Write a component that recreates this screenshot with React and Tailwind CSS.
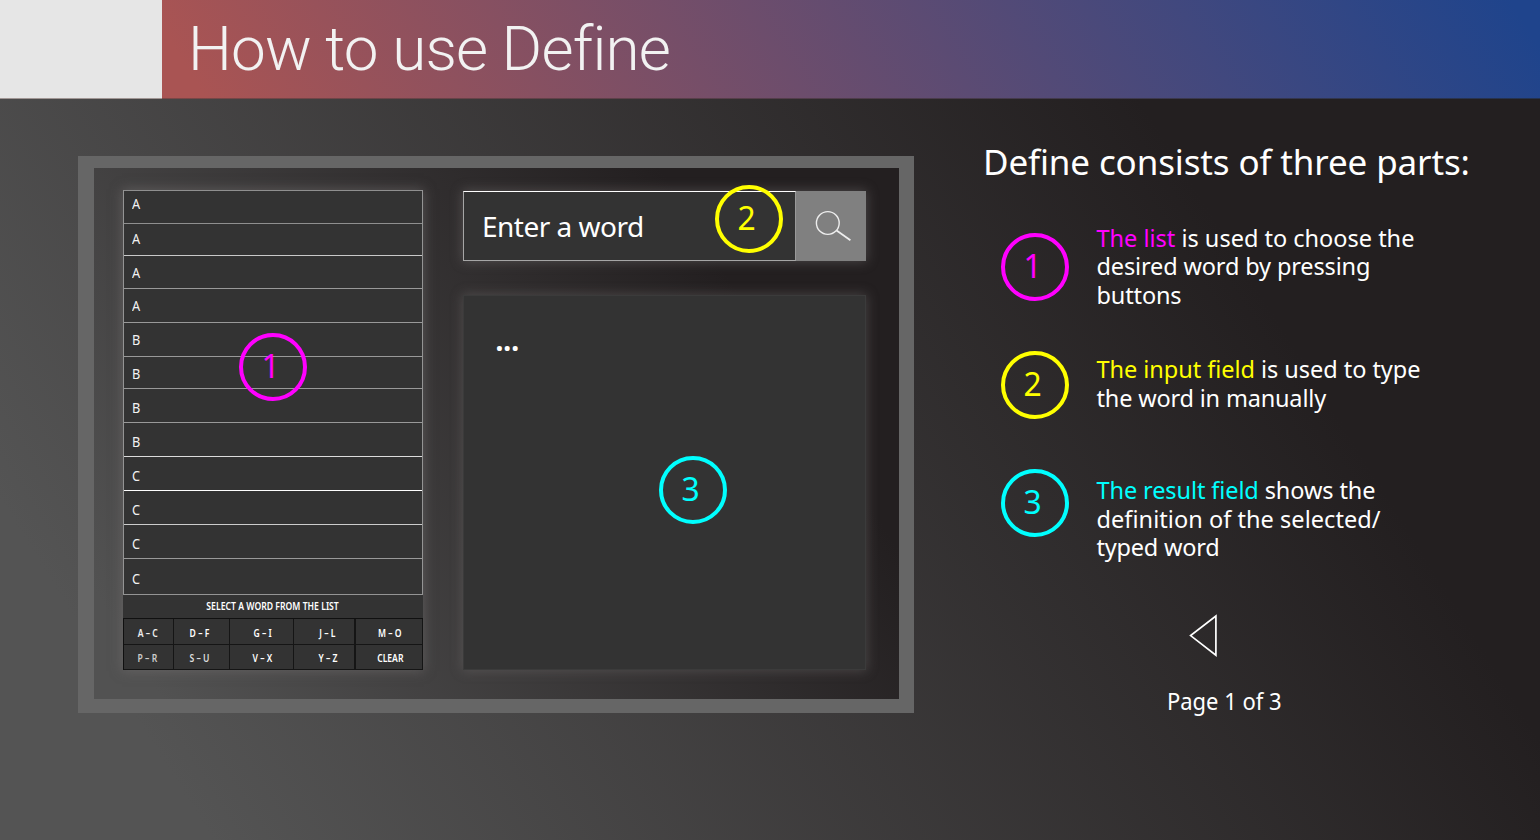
const rows = [
  { letter: "A", cls: "h-[33px] border-[#8f8f8f] pb-[7px]" },
  { letter: "A", cls: "h-[32px] border-[#8f8f8f] pb-[2px]" },
  { letter: "A", cls: "h-[33px] border-[#c9c9c9]" },
  { letter: "A", cls: "h-[34px] border-[#999999]" },
  { letter: "B", cls: "h-[34px] border-[#999999]" },
  { letter: "B", cls: "h-[32px] border-[#999999] pt-[1px]" },
  { letter: "B", cls: "h-[34px] border-[#999999] pt-[4px]" },
  { letter: "B", cls: "h-[34px] border-[#999999] pt-[4px]" },
  { letter: "C", cls: "h-[34px] border-[#dcdcdc] pt-[4px]" },
  { letter: "C", cls: "h-[34px] border-[#ffffff] pt-[4px]" },
  { letter: "C", cls: "h-[34px] border-[#cccccc] pt-[4px]" },
  { letter: "C", cls: "h-[36px] border-[#999999] pt-[4px]" },
];

const ranges = [
  { label: "A – C", cls: "border-r pr-[2px] pt-[3px] text-[#eeeeee]" },
  { label: "D – F", cls: "border-r pr-[4px] pt-[3px]" },
  { label: "G – I", cls: "border-r pl-[2px] pt-[3px]" },
  { label: "J – L", cls: "border-r-2 pl-[7px] pt-[3px]" },
  { label: "M – O", cls: "border-r pl-[2px] pt-[3px]" },
  { label: "P – R", cls: "border-r pr-[2px] pt-[1px] text-[#cccccc]" },
  { label: "S – U", cls: "border-r pr-[4px] pt-[1px] text-[#dddddd]" },
  { label: "V – X", cls: "border-r pl-[2px] pt-[1px]" },
  { label: "Y – Z", cls: "border-r-2 pl-[7px] pt-[1px]" },
  { label: "CLEAR", cls: "border-r pl-[2px] pt-[1px]" },
];

function Badge({ n, cls }) {
  return (
    <div
      className={`flex size-[68px] shrink-0 items-center justify-center rounded-full border-4 pr-[4px] pb-[2px] text-[33.5px] leading-none ${cls}`}
    >
      <span className="inline-block scale-x-95">{n}</span>
    </div>
  );
}

function WordList() {
  return (
    <div className="flex w-[300px] flex-col self-start bg-[#333333] shadow-[0_0_11px_1px_rgba(120,116,116,0.5)]">
      <div className="border-r border-b border-l border-[#949494]">
        {rows.map((row, i) => (
          <div
            key={i}
            className={`flex items-center border-t pl-[8px] text-[14.5px] leading-none text-[#f2f2f2] ${row.cls}`}
          >
            <span className="inline-block origin-left scale-x-[0.88]">{row.letter}</span>
          </div>
        ))}
      </div>
      <div className="flex h-[23px] items-center justify-center pb-[1px] text-[10px] leading-none font-semibold whitespace-nowrap">
        <span className="inline-block scale-x-[0.865]">SELECT A WORD FROM THE LIST</span>
      </div>
      <div className="grid grid-cols-[50px_56px_64px_62px_67px] grid-rows-[26px_25px] border-t border-l border-[#101010]">
        {ranges.map((r) => (
          <div
            key={r.label}
            className={`flex items-center justify-center border-b border-[#151515] text-[10px] leading-none font-semibold whitespace-nowrap ${r.cls}`}
          >
            <span className="inline-block scale-x-[0.86]">{r.label}</span>
          </div>
        ))}
      </div>
    </div>
  );
}

function Demo() {
  return (
    <div className="relative flex h-[557px] w-[836px] border-t-[12px] border-r-[15px] border-b-[14px] border-l-[16px] border-[#666666] bg-[linear-gradient(58deg,#525252_6%,#231f20_79%)] bg-origin-padding pt-[22px] pl-[29px]">
      <WordList />
      <div className="ml-[40px] flex w-[403px] flex-col">
        <div className="mt-px flex h-[70px] shadow-[0_0_11px_1px_rgba(120,116,116,0.45)]">
          <div className="flex grow items-center border border-t-white border-r-[#999999] border-b-[#a6a6a6] border-l-[#a6a6a6] bg-[#333333] pl-[18px] text-[28px] leading-none tracking-[-0.5px]">
            Enter a word
          </div>
          <div className="flex w-[70px] items-center justify-center bg-[#808080]">
            <svg className="h-[70px] w-[70px]" viewBox="0 0 70 70" fill="none" stroke="#eeeeee" strokeWidth="1.4">
              <circle cx="31.8" cy="32" r="11.4" />
              <path d="M40.6 39.6 L54.4 49.2" strokeWidth="1.8" />
            </svg>
          </div>
        </div>
        <div className="mt-[34px] h-[375px] border border-[#3b3b3b] bg-[#333333] pt-[23px] pl-[31px] text-[32px] leading-[40px] font-semibold tracking-[-1px] shadow-[0_0_11px_1px_rgba(120,116,116,0.4)]">
          ...
        </div>
      </div>
      <div className="absolute top-[165px] left-[145px]">
        <Badge n="1" cls="border-[#ff00ff] text-[#ff00ff]" />
      </div>
      <div className="absolute top-[16.5px] left-[620.5px]">
        <Badge n="2" cls="border-[#ffff00] text-[#ffff00]" />
      </div>
      <div className="absolute top-[287.5px] left-[565px]">
        <Badge n="3" cls="border-[#00ffff] text-[#00ffff]" />
      </div>
    </div>
  );
}

function Guide() {
  return (
    <div className="ml-[68px] flex w-[520px] flex-col pt-[38px]">
      <h2 className="h-[87px] pt-px pl-px text-[35px] leading-[50px] tracking-[-0.13px] whitespace-nowrap">
        Define consists of three parts:
      </h2>
      <ul className="grid h-[354px] grid-rows-3 pl-[19px] text-[23.5px] leading-[28.6px] whitespace-nowrap">
        <li className="flex gap-[27.5px]">
          <div className="pt-[9.5px]">
            <Badge n="1" cls="border-[#ff00ff] text-[#ff00ff]" />
          </div>
          <p className="pt-[0.8px]">
            <span className="text-[#ff00ff]">The list</span> is used to choose the
            <br />
            <span className="tracking-[-0.14px]">desired word by pressing</span>
            <br />
            <span className="tracking-[-0.14px]">buttons</span>
          </p>
        </li>
        <li className="flex gap-[27.5px]">
          <div className="pt-[9.5px]">
            <Badge n="2" cls="border-[#ffff00] text-[#ffff00]" />
          </div>
          <p className="pt-[14px] tracking-[-0.04px]">
            <span className="text-[#ffff00]">The input field</span> is used to type
            <br />
            <span className="tracking-[-0.18px]">the word in manually</span>
          </p>
        </li>
        <li className="flex gap-[27.5px]">
          <div className="pt-[9.5px]">
            <Badge n="3" cls="border-[#00ffff] text-[#00ffff]" />
          </div>
          <p className="pt-[17px]">
            <span className="tracking-[-0.1px]">
              <span className="text-[#00ffff]">The result field</span> shows the
            </span>
            <br />
            <span className="tracking-[0.05px]">definition of the selected/</span>
            <br />
            <span className="tracking-[-0.2px]">typed word</span>
          </p>
        </li>
      </ul>
      <div className="flex w-[485px] flex-col items-center">
        <svg className="mt-[35px] mr-[42px] h-[46px] w-[30px]" viewBox="0 0 30 46" fill="none" stroke="#ffffff" strokeWidth="1.7">
          <path d="M26.9 4 V43.2 L1.6 23.6 Z" />
        </svg>
        <p className="mt-[29px] text-[23.5px] leading-[28px] whitespace-nowrap">
          <span className="inline-block scale-x-[0.935]">Page 1 of 3</span>
        </p>
      </div>
    </div>
  );
}

export default function App() {
  return (
    <div className="flex h-[840px] w-[1540px] flex-col overflow-hidden bg-[#231f20] font-['Noto_Sans',sans-serif] text-white">
      <header className="flex h-[98px] shrink-0">
        <div className="w-[162px] bg-[#e6e6e6]" />
        <div className="flex grow items-center bg-[linear-gradient(58deg,#a95453_3%,#1f448c_98%)] pl-[26px]">
          <h1 className="font-['Roboto',sans-serif] text-[62px] leading-[98px] font-light tracking-[-0.8px] whitespace-nowrap text-[#f2f2f2]">
            How to use Define
          </h1>
        </div>
      </header>
      <div className="-mb-px flex h-px shrink-0">
        <div className="z-10 w-[162px] bg-[#a09694]" />
        <div className="z-10 grow bg-[linear-gradient(90deg,#7a4746,#24324f)]" />
      </div>
      <main className="flex grow bg-[linear-gradient(58deg,#545454_10.6%,#231f20_80%)] pt-[58px] pl-[78px]">
        <Demo />
        <div className="-mt-[58px]">
          <Guide />
        </div>
      </main>
    </div>
  );
}
